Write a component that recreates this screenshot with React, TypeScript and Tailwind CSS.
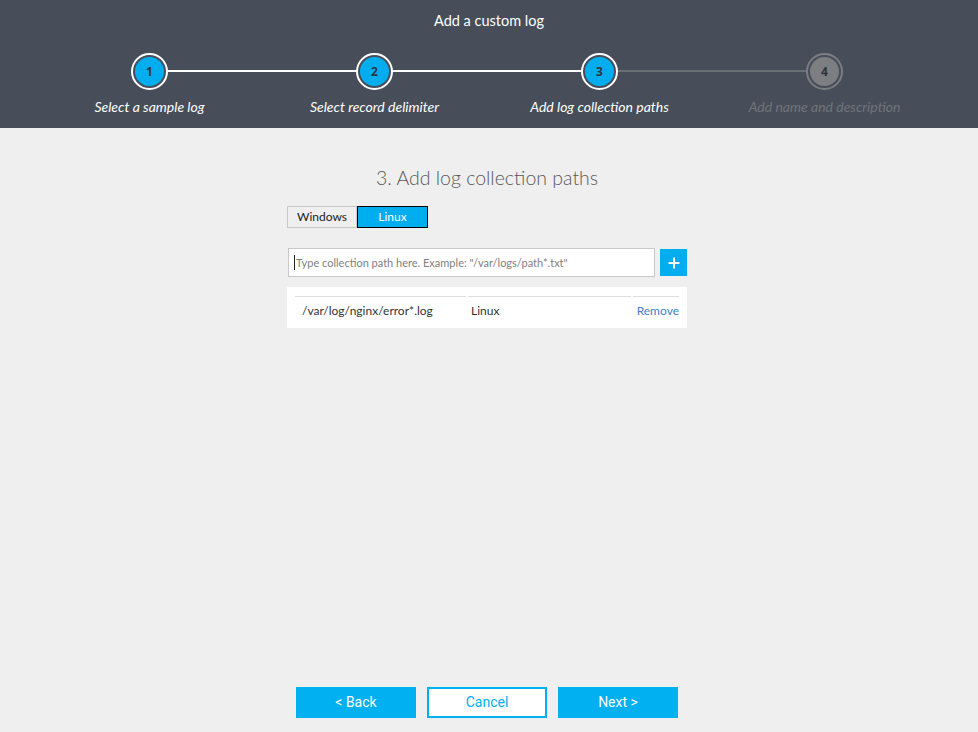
import { Plus } from 'lucide-react';

type Step = { n: number; label: string; state: 'done' | 'current' | 'todo' };

const steps: Step[] = [
  { n: 1, label: 'Select a sample log', state: 'done' },
  { n: 2, label: 'Select record delimiter', state: 'done' },
  { n: 3, label: 'Add log collection paths', state: 'current' },
  { n: 4, label: 'Add name and description', state: 'todo' },
];

const font = { fontFamily: '"Segoe UI", Lato, "Noto Sans", sans-serif' };

function StepCircle({ step }: { step: Step }) {
  const active = step.state !== 'todo';
  return (
    <div
      className={`relative z-10 flex h-[37px] w-[37px] items-center justify-center rounded-full border-2 ${
        active ? 'border-white' : 'border-[#7a7d82]'
      } bg-[#474e59] p-[2px]`}
    >
      <div
        className={`flex h-full w-full items-center justify-center rounded-full text-[12px] font-bold text-[#2f3540] ${
          active ? 'bg-[#00adef]' : 'bg-[#7c7e82]'
        }`}
        style={{ fontFamily: '"Noto Sans", sans-serif' }}
      >
        {step.n}
      </div>
    </div>
  );
}

function Stepper() {
  return (
    <div className="ml-[37px] flex w-[900px]">
      {steps.map((step, i) => {
        const next = steps[i + 1];
        const lineDone = next && next.state !== 'todo';
        return (
          <div key={step.n} className="relative flex w-[225px] flex-col items-center">
            {next && (
              <div
                className={`absolute left-[112px] top-[17px] h-[2px] w-[225px] ${
                  lineDone ? 'bg-white' : 'bg-[#696e75]'
                }`}
              />
            )}
            <StepCircle step={step} />
            <div
              className={`mt-[6px] text-[14px] italic ${
                step.state === 'todo' ? 'text-[#6f747b]' : 'text-white'
              }`}
            >
              {step.label}
            </div>
          </div>
        );
      })}
    </div>
  );
}

export default function App() {
  return (
    <div className="flex min-h-screen flex-col bg-[#efefef]" style={font}>
      {/* Wizard header */}
      <header className="h-[128px] bg-[#474e59] pt-[11px]">
        <h1 className="text-center text-[14.5px] leading-[20px] text-white">Add a custom log</h1>
        <div className="mt-[22px]">
          <Stepper />
        </div>
      </header>

      <main className="flex flex-1 flex-col items-center pr-[4px]">
        <h2 className="mt-[35px] text-[19.5px] font-light text-[#595959]">3. Add log collection paths</h2>

        <div className="mt-[14px] w-[400px]">
          {/* OS toggle */}
          <div className="flex text-[12px]">
            <button className="h-[22px] w-[70px] border border-[#c8c8c8] bg-[#efefef] text-[#222]">
              Windows
            </button>
            <button className="h-[22px] w-[71px] border border-black bg-[#00adef] text-white">
              Linux
            </button>
          </div>

          {/* Path input */}
          <div className="mt-[20px] flex items-center gap-[5px] pl-[1px]">
            <div className="flex h-[29px] flex-1 items-center border border-[#c8c8c8] bg-white px-[5px]">
              <span className="mr-[1px] h-[15px] w-px bg-[#222]" />
              <span className="text-[11px] text-[#808080]">
                Type collection path here. Example: "/var/logs/path*.txt"
              </span>
            </div>
            <button className="flex h-[27px] w-[27px] items-center justify-center bg-[#00adef] text-white">
              <Plus size={16} strokeWidth={3} />
            </button>
          </div>

          {/* Collected paths */}
          <div className="mt-[10px] bg-white px-[8px] pb-[7px] pt-[9px] text-[12px]">
            <div className="flex gap-[2px]">
              <div className="h-px w-[171px] bg-[#dedede]" />
              <div className="h-px w-[163px] bg-[#dedede]" />
              <div className="h-px flex-1 bg-[#dedede]" />
            </div>
            <div className="mt-[4px] flex items-center leading-[20px]">
              <div className="w-[173px] pl-[7px] text-[#333]">/var/log/nginx/error*.log</div>
              <div className="w-[165px] pl-[3px] text-[#333]">Linux</div>
              <div className="flex-1 text-right text-[12px] text-[#3d7fcc]">Remove</div>
            </div>
          </div>
        </div>

        <div className="flex-1" />

        {/* Wizard navigation */}
        <div
          className="mb-[14px] flex gap-[11px] text-[14px]"
          style={{ fontFamily: 'Roboto, "Noto Sans", sans-serif' }}
        >
          <button className="h-[31px] w-[120px] bg-[#00b0f0] text-white">&lt; Back</button>
          <button className="h-[31px] w-[120px] border-2 border-[#00b0f0] bg-white text-[#00b0f0]">
            Cancel
          </button>
          <button className="h-[31px] w-[120px] bg-[#00b0f0] text-white">Next &gt;</button>
        </div>
      </main>
    </div>
  );
}
